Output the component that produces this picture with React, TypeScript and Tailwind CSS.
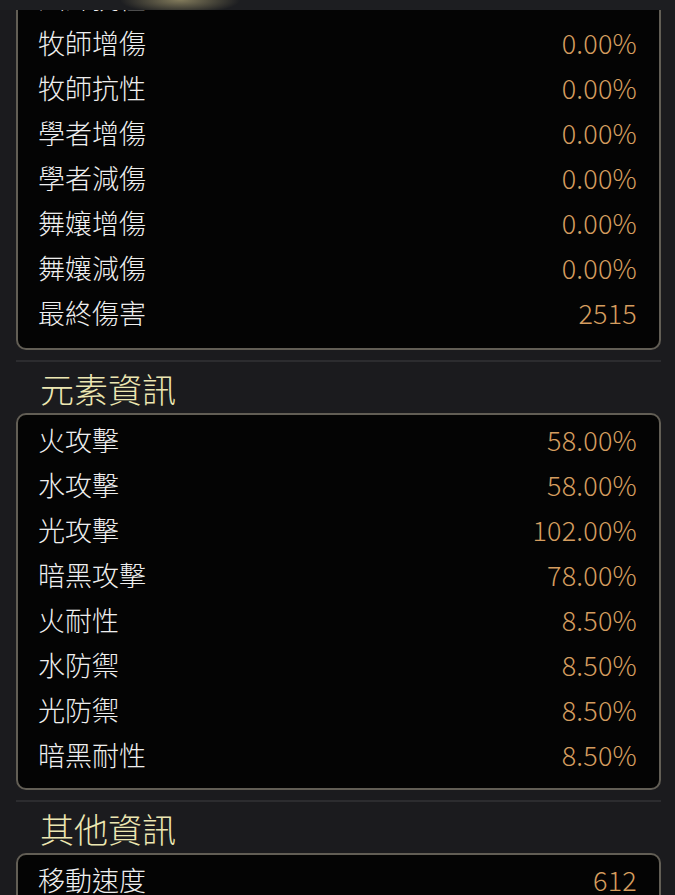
import React from 'react'

type Row = { label: string; value: string }

const combat: Row[] = [
  { label: '法師抗性', value: '0.00%' },
  { label: '牧師增傷', value: '0.00%' },
  { label: '牧師抗性', value: '0.00%' },
  { label: '學者增傷', value: '0.00%' },
  { label: '學者減傷', value: '0.00%' },
  { label: '舞孃增傷', value: '0.00%' },
  { label: '舞孃減傷', value: '0.00%' },
  { label: '最終傷害', value: '2515' },
]

const elements: Row[] = [
  { label: '火攻擊', value: '58.00%' },
  { label: '水攻擊', value: '58.00%' },
  { label: '光攻擊', value: '102.00%' },
  { label: '暗黑攻擊', value: '78.00%' },
  { label: '火耐性', value: '8.50%' },
  { label: '水防禦', value: '8.50%' },
  { label: '光防禦', value: '8.50%' },
  { label: '暗黑耐性', value: '8.50%' },
]

const others: Row[] = [
  { label: '移動速度', value: '612' },
  { label: '攻擊速度', value: '0' },
]

function StatPanel({ rows, className = 'rounded-[10px] border-2 pb-[10px] pt-[3px]' }: { rows: Row[]; className?: string }) {
  return (
    <div className={`border-[#625e55] bg-[#040404] pl-[20px] pr-[22px] ${className}`}>
      {rows.map(r => (
        <div key={r.label} className="flex h-[45px] items-center justify-between">
          <span className="text-[27px] font-light text-[#efefef]">{r.label}</span>
          <span className="text-[27px] font-light tracking-[0.2px] text-[#d59d5f]">{r.value}</span>
        </div>
      ))}
    </div>
  )
}

function SectionTitle({ title }: { title: string }) {
  return (
    <>
      <div className="mt-[10px] h-[2px] bg-[#2c2c2f]" />
      <div className="flex h-[51px] items-center pl-[24px] pt-[2px]">
        <h2 className="text-[34px] font-light leading-none text-[#ede7b2]">{title}</h2>
      </div>
    </>
  )
}

export default function App() {
  return (
    <div
      className="relative h-[895px] w-[675px] overflow-hidden bg-[#1b1b1e]"
      style={{ fontFamily: '"Noto Sans CJK TC", "Noto Sans", sans-serif' }}
    >
      {/* top bar over the scrolled list */}
      <div className="absolute inset-x-0 top-0 z-10 h-[10px] bg-[#1d1e21] bg-[radial-gradient(ellipse_60px_14px_at_180px_0px,rgba(214,200,140,0.55),transparent)]" />

      <div className="mt-[-27px] pl-[16px] pr-[14px]">
        <StatPanel rows={combat} className="rounded-b-[10px] border-x-2 border-b-2 pb-[12px] pt-[3px]" />
        <SectionTitle title="元素資訊" />
        <StatPanel rows={elements} />
        <SectionTitle title="其他資訊" />
        <StatPanel rows={others} />
      </div>
    </div>
  )
}
